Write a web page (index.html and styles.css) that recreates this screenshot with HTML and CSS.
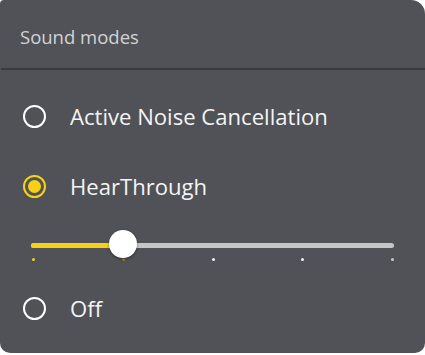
FILE: index.html
```html
<!DOCTYPE html>
<html>
<head>
<meta charset="utf-8">
<link rel="stylesheet" href="styles.css">
</head>
<body>
<div class="card">
  <div class="header">Sound modes</div>
  <div class="divider"></div>
  <div class="option first">
    <span class="radio"></span>
    <span class="label">Active Noise Cancellation</span>
  </div>
  <div class="option">
    <span class="radio checked"></span>
    <span class="label">HearThrough</span>
  </div>
  <div class="slider">
    <div class="track">
      <div class="fill"></div>
      <div class="thumb"></div>
    </div>
    <div class="ticks">
      <span class="tick on"></span>
      <span class="tick under"></span>
      <span class="tick"></span>
      <span class="tick"></span>
      <span class="tick dim"></span>
    </div>
  </div>
  <div class="option">
    <span class="radio"></span>
    <span class="label">Off</span>
  </div>
</div>
</body>
</html>
```
FILE: styles.css
```css
html, body {
  margin: 0;
  padding: 0;
  background: #ffffff;
}
body {
  width: 425px;
  height: 355px;
  font-family: "Open Sans", "Noto Sans", sans-serif;
}
.card {
  width: 425px;
  height: 353px;
  background: #505257;
  border-radius: 4px 14px 10px 10px;
  overflow: hidden;
}
.header {
  color: #d2d3d5;
  font-size: 18.5px;
  height: 68px;
  line-height: 74px;
  padding-left: 20px;
}
.divider {
  height: 2px;
  background: #393b3f;
  margin-left: 1px;
}
.option {
  display: flex;
  align-items: center;
  height: 70px;
  padding-left: 23px;
}
.option.first {
  margin-top: 11px;
}
.radio {
  width: 19px;
  height: 19px;
  border: 2.5px solid #ffffff;
  border-radius: 50%;
  display: flex;
  align-items: center;
  justify-content: center;
  flex: none;
}
.radio.checked {
  border-color: #f7d117;
}
.radio.checked::after {
  content: "";
  width: 13px;
  height: 13px;
  border-radius: 50%;
  background: #f7d117;
}
.label {
  color: #f4f4f4;
  font-size: 22.1px;
  margin-left: 24px;
}
.slider {
  box-sizing: border-box;
  padding: 22px 31px 0;
  height: 52px;
}
.track {
  position: relative;
  height: 5px;
  border-radius: 3px;
  background: #c6c6c7;
}
.fill {
  width: 92px;
  height: 5px;
  border-radius: 3px;
  background: #f7d117;
}
.thumb {
  position: absolute;
  left: 78px;
  top: -13px;
  width: 28px;
  height: 28px;
  border-radius: 50%;
  background: #ffffff;
  box-shadow: 0 1px 3px rgba(0,0,0,0.45);
}
.ticks {
  display: flex;
  justify-content: space-between;
  margin-top: 10px;
  padding-left: 1px;
}
.tick {
  width: 3px;
  height: 3px;
  border-radius: 50%;
  background: #f0f0f0;
}
.tick.on {
  background: #f7d117;
}
.tick.under {
  background: #9a8520;
}
.tick.dim {
  background: #c6c6c7;
}
```
